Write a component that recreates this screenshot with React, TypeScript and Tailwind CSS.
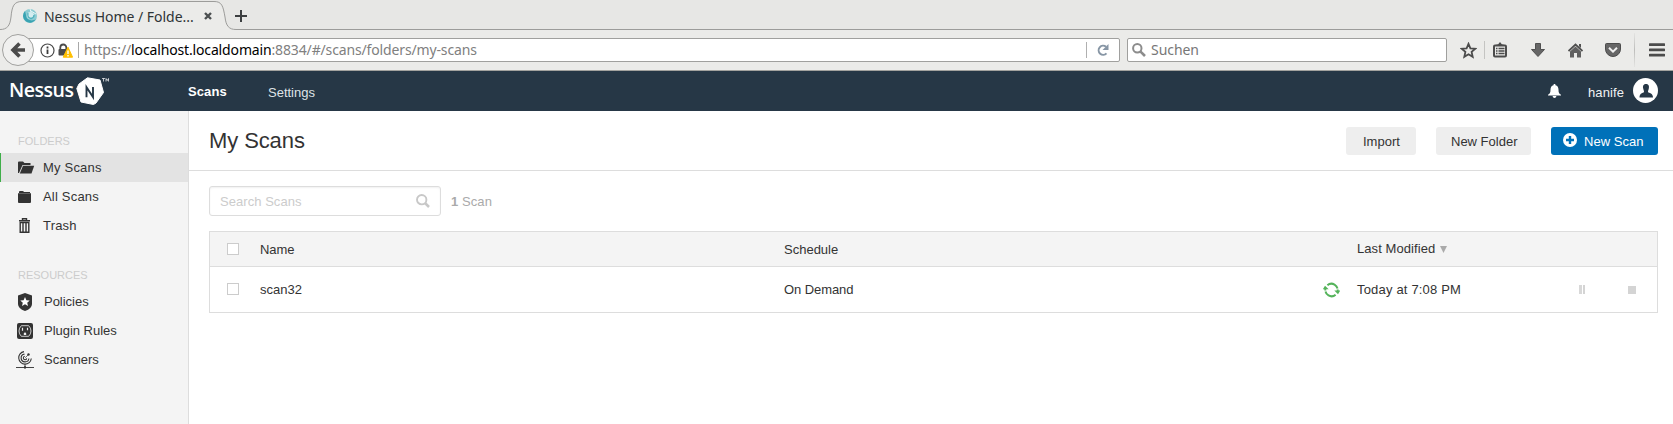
import React from "react";

function TabStrip() {
  return (
    <div className="relative flex h-[30px] bg-[#e7e7e5] font-['Noto_Sans',sans-serif]">
      <svg className="absolute inset-0" width="1673" height="30" viewBox="0 0 1673 30">
        <path d="M0 29.5C7 29.5 10 26 11 17C12 6 14 1.5 22 1.5H214C222 1.5 223 6 225 17C226 26 229 29.5 236 29.5V30H0Z" fill="#ebebe9" />
        <path d="M0 29.5C7 29.5 10 26 11 17C12 6 14 1.5 22 1.5H214C222 1.5 223 6 225 17C226 26 229 29.5 236 29.5H1673" fill="none" stroke="#9c9c9a" />
      </svg>
      <div className="relative flex h-8 items-center">
        <svg className="ml-[23px]" width="14" height="14" viewBox="0 0 14 14">
          <circle cx="7" cy="7" r="7" fill="#8ccbd2" />
          <path d="M2 2A7 7 0 0 0 3 12.600A7 7 0 0 0 13 10C9 13 3 11 3 6Z" fill="#39a3b2" />
          <circle cx="7.500" cy="6.500" r="3.500" fill="#d5edf0" />
          <path d="M5 4Q4 9 8 9.500Q11 9 11 6" fill="none" stroke="#52b2be" strokeWidth="1.300" />
          <path d="M8 2L13 5M7 0L8 3" stroke="#e8f6f7" strokeWidth="1" />
        </svg>
        <span className="ml-[7px] w-[151px] whitespace-nowrap text-[14px] tracking-[-0.030px] text-[#2e3436]">Nessus Home / Folde...</span>
        <svg className="ml-[9px]" width="8" height="8" viewBox="0 0 8 8">
          <path d="M1 1L7 7M7 1L1 7" stroke="#4b4f50" strokeWidth="2.400" />
        </svg>
        <svg className="ml-[23px]" width="12" height="12" viewBox="0 0 12 12">
          <path d="M6 0V12M0 6H12" stroke="#3c3f40" strokeWidth="2" />
        </svg>
      </div>
    </div>
  );
}

function Toolbar() {
  return (
    <div className="flex h-[41px] items-center border-b border-[#a3a39f] bg-[#ebebe9] font-['Noto_Sans',sans-serif]">
      <svg className="relative z-10 ml-[2px] shrink-0" width="32" height="32" viewBox="0 0 32 32">
        <circle cx="16" cy="16" r="15.500" fill="#f0f0ef" stroke="#a0a09e" />
        <path d="M17.500 9.500L11 16L17.500 22.500M11 16H23" fill="none" stroke="#4b4b4b" strokeWidth="3.600" />
      </svg>
      <div className="-ml-[8px] flex h-[24px] w-[1094px] items-center rounded-r-[2px] border border-[#a0a09e] bg-white">
        <svg className="ml-[13px]" width="15" height="15" viewBox="0 0 15 15">
          <circle cx="7.500" cy="7.500" r="6.500" fill="none" stroke="#4a4a4a" strokeWidth="1.200" />
          <path d="M7.500 6.500V11M7.500 3.500V5.500" stroke="#3c3c3c" strokeWidth="1.800" />
        </svg>
        <svg className="ml-[3px]" width="15" height="15" viewBox="0 0 15 15">
          <path d="M2.300 7V4.500A3 3 0 0 1 8.300 4.500V7" fill="none" stroke="#4a4a4a" strokeWidth="1.800" />
          <rect x="0.500" y="6" width="9" height="6.500" rx="1" fill="#4a4a4a" />
          <path d="M10 4.200L14.600 14.200H5.200Z" fill="#ffbf00" stroke="#ffbf00" strokeLinejoin="round" />
          <path d="M10 7.500V11M10 12V13.400" stroke="#fff" strokeWidth="1.400" />
        </svg>
        <span className="ml-[5px] h-4 w-px bg-[#a8a8a8]" />
        <span className="ml-[5px] whitespace-nowrap text-[14px] leading-[22px] tracking-[-0.145px] text-[#808080]">
          https://<span className="text-black">localhost.localdomain</span>:8834/#/scans/folders/my-scans
        </span>
        <span className="ml-auto h-4 w-px bg-[#b0b0b0]" />
        <svg className="mx-[10px]" width="12" height="12" viewBox="0 0 12 12">
          <path d="M9.500 9.300A4.500 4.500 0 1 1 9 2.800" fill="none" stroke="#8796a5" strokeWidth="2" />
          <path d="M11.500 0V6H5.500Z" fill="#8796a5" />
        </svg>
      </div>
      <div className="ml-[7px] flex h-[24px] w-[320px] items-center rounded-[2px] border border-[#a0a09e] bg-white">
        <svg className="ml-1" width="14" height="14" viewBox="0 0 14 14">
          <circle cx="5.300" cy="5.300" r="4.200" fill="none" stroke="#8c8c8c" strokeWidth="2" />
          <path d="M8.300 8.300L13 13" stroke="#8c8c8c" strokeWidth="2.600" />
        </svg>
        <span className="ml-[5px] text-[14px] leading-[22px] tracking-[-0.050px] text-[#777]">Suchen</span>
      </div>
      <svg className="ml-[13px]" width="17" height="17" viewBox="0 0 17 17">
        <path d="M8.500 1.800L10.400 6.300L15.300 6.700L11.600 9.900L12.700 14.800L8.500 12.200L4.300 14.800L5.400 9.900L1.700 6.700L6.600 6.300Z" fill="none" stroke="#4c4c4c" strokeWidth="1.800" />
      </svg>
      <span className="ml-[7px] h-[18px] w-px bg-[#c4c4c2]" />
      <svg className="ml-2" width="14" height="16" viewBox="0 0 14 16">
        <rect x="1" y="3.500" width="12" height="11" rx="1" fill="#ebebe9" stroke="#4c4c4c" strokeWidth="2" />
        <path d="M3.500 4V2.500H5L7 0L9 2.500H10.500V4Z" fill="#4c4c4c" />
        <path d="M3 6.500H4.500M5.500 6.500H11.500M3 9H4.500M5.500 9H11.500M3 11.500H4.500M5.500 11.500H11.500" stroke="#4c4c4c" strokeWidth="1.300" />
      </svg>
      <svg className="ml-6" width="14" height="14" viewBox="0 0 14 14">
        <path d="M4.500 0.500H9.500V6.500H13.500L7 13.500L0.500 6.500H4.500Z" fill="#666" stroke="#505050" />
      </svg>
      <svg className="ml-[23px]" width="15" height="15" viewBox="0 0 15 15">
        <path d="M0.500 8L7.500 1.500L14.500 8" fill="none" stroke="#505050" strokeWidth="1.800" />
        <path d="M7.500 3.500L13 8.500V14.500H9V10H6V14.500H2V8.500Z" fill="#606060" />
        <path d="M11 1H13V5L11 3.200Z" fill="#505050" />
      </svg>
      <svg className="ml-[22px]" width="16" height="14" viewBox="0 0 16 14">
        <path d="M1.500 0.500H14.500Q15.500 0.500 15.500 1.500V6A7.500 7.500 0 0 1 0.500 6V1.500Q0.500 0.500 1.500 0.500Z" fill="#666" stroke="#4c4c4c" />
        <path d="M4 4.800L8 8.600L12 4.800" fill="none" stroke="#f0f0f0" strokeWidth="2" />
      </svg>
      <span className="ml-[13px] h-[34px] w-px bg-gradient-to-b from-[#e4e4e2] via-[#bdbdbb] to-[#e4e4e2]" />
      <svg className="ml-[14px]" width="16" height="14" viewBox="0 0 16 14">
        <path d="M1 1.700H15M1 6.900H15M1 12.100H15" stroke="#4c4c4c" strokeWidth="2.800" strokeLinecap="round" />
      </svg>
    </div>
  );
}

function Header() {
  return (
    <header className="flex h-10 bg-[#263746] text-[13px] leading-10">
      <div className="flex w-[179px] shrink-0 pl-[9px]">
        <span className="w-[65px] font-['Open_Sans',sans-serif] text-[19.500px] font-semibold leading-[38px] tracking-[-0.500px] text-white">Nessus</span>
        <svg className="ml-[2px] mt-[6px]" width="33" height="29" viewBox="0 0 33 29">
          <path d="M11.500 0.800L24 3L27.500 15.500L20 26L17.500 27.500L5 25L0.800 11.500L3 7Z" fill="#fff" stroke="#fff" strokeLinejoin="round" />
          <path d="M10.500 20.200V10.200L17 20V10" fill="none" stroke="#263746" strokeWidth="1.900" />
          <path d="M26 1.500H29M27.500 1.500V4.500M30 4.500V1.500L31.300 3.500L32.500 1.500V4.500" fill="none" stroke="#fff" strokeWidth="0.700" />
        </svg>
      </div>
      <span className="ml-[9px] mt-px w-[80px] font-bold tracking-[0.100px] text-white">Scans</span>
      <span className="mt-[2px] text-[#dfe3e6]">Settings</span>
      <div className="ml-auto flex pr-[15px]">
        <svg className="mt-[13px]" width="13" height="14" viewBox="0 0 13 14">
          <path d="M6.500 0C7.300 0 7.500 .6 7.500 1.200C9.600 1.700 10.500 3.400 10.500 5.800C10.500 8.700 11.200 10 13 10.800V11.500H0V10.800C1.800 10 2.500 8.700 2.500 5.800C2.500 3.400 3.400 1.700 5.500 1.200C5.500 .6 5.700 0 6.500 0ZM4.500 12H8.500Q8 14 6.500 14Q5 14 4.500 12Z" fill="#fff" />
        </svg>
        <span className="ml-[27px] mt-[2px] w-[45px] tracking-[0.100px] text-[#f0f2f4]">hanife</span>
        <svg className="mt-[7px]" width="25" height="25" viewBox="0 0 25 25">
          <circle cx="12.500" cy="12.500" r="12.500" fill="#fff" />
          <path d="M13 6C16 6 16.300 8.500 15.800 10.500C15.500 12 15 12.500 15 14C16 15.300 20 15 20 19.500H6.500C6.500 15 10 15.300 11 14C11 12.500 10.500 12 10.200 10.500C9.700 8.500 10 6 13 6Z" fill="#263746" />
        </svg>
      </div>
    </header>
  );
}

function NavItem({ icon, label, active, shifted }: { icon: React.ReactNode; label: string; active?: boolean; shifted?: boolean }) {
  return (
    <div className={`flex h-[29px] items-center border-l ${active ? "border-[#3fae49] bg-[#e3e3e3]" : "border-transparent"}`}>
      <span className={`flex justify-start ${shifted ? "w-[43px] pl-[15px]" : "w-[42px] pl-[17px]"}`}>{icon}</span>
      <span className={`mt-px text-[13px] leading-[20px] text-[#333] ${shifted ? "tracking-[-0.020px]" : "tracking-[0.200px]"}`}>{label}</span>
    </div>
  );
}

function Sidebar() {
  return (
    <aside className="w-[189px] shrink-0 border-r border-[#ddd] bg-[#f4f4f4]">
      <div className="h-[42px] pl-[18px] pt-[20px] text-[11px] leading-[20px] text-[#ccc]">FOLDERS</div>
      <NavItem active label="My Scans" icon={
        <svg width="17" height="13" viewBox="0 0 17 13" className="shrink-0">
          <path d="M0 12V1.500Q0 .5 1 .5H5L6.500 2H12.500V4H4.500L1 12Z" fill="#333" />
          <path d="M5 4.800H16.200L13.500 12.500H1.800Z" fill="#333" />
        </svg>} />
      <NavItem label="All Scans" icon={
        <svg width="13" height="12" viewBox="0 0 13 12" className="shrink-0">
          <path d="M1 1.500V.8Q1 0 2 0H4.500Q5.500 0 6 1H12V2H1ZM0 2.300H13V11Q13 12 12 12H1Q0 12 0 11Z" fill="#333" />
        </svg>} />
      <NavItem label="Trash" icon={
        <svg width="13" height="15" viewBox="0 0 13 15" className="shrink-0">
          <path d="M4.500 2V.7H8.500V2M1 2.700H12" fill="none" stroke="#333" strokeWidth="1.400" />
          <path d="M2.200 4.500H10.800V14.300H2.200Z" fill="none" stroke="#333" strokeWidth="1.400" />
          <path d="M5 4V14M8 4V14" stroke="#333" strokeWidth="1.400" />
        </svg>} />
      <div className="h-[47px] pl-[18px] pt-[25px] text-[11px] leading-[20px] text-[#ccc]">RESOURCES</div>
      <NavItem shifted label="Policies" icon={
        <svg width="18" height="18" viewBox="0 0 18 18" className="shrink-0">
          <path d="M9 0L16 2.500V11Q16 15.500 9 18Q2 15.500 2 11V2.500Z" fill="#333" />
          <path d="M9 4L10.400 7.200L13.700 7.500L11.200 9.700L12 13L9 11.300L6 13L6.800 9.700L4.300 7.500L7.600 7.200Z" fill="#fff" />
        </svg>} />
      <NavItem shifted label="Plugin Rules" icon={
        <svg width="17" height="16" viewBox="0 0 17 16" className="shrink-0">
          <rect x="1" width="16" height="16" rx="2" fill="#333" />
          <path d="M5.300 2.700H12.700Q15 5 15 8T12.700 13.300H5.300Q3 11 3 8T5.300 2.700Z" fill="none" stroke="#ddd" strokeWidth="0.900" />
          <path d="M6.500 4.700V7.800M11.500 4.700V7.300" stroke="#eee" strokeWidth="1.200" />
          <path d="M7.800 12V10.700Q7.800 9.500 9 9.500T10.200 10.700V12Z" fill="#eee" />
        </svg>} />
      <NavItem shifted label="Scanners" icon={
        <svg width="18" height="18" viewBox="0 0 18 18" className="shrink-0">
          <path d="M8 .6A6.300 6.300 0 1 0 15.300 7.500M8.500 3.100A3.900 3.900 0 1 0 12.900 7.500M8.800 5.300A1.700 1.700 0 1 0 10.700 7.300" fill="none" stroke="#333" strokeWidth="1.100" />
          <path d="M9 13V16M0 16.500H18" stroke="#444" />
          <path d="M9.200 6.800L12 4" stroke="#333" strokeWidth="0.700" />
          <circle cx="12.500" cy="3.500" r="1.200" fill="#333" />
          <rect x="8" y="15.300" width="2" height="2.200" fill="#333" />
        </svg>} />
    </aside>
  );
}

function Checkbox() {
  return <span className="h-3 w-3 border border-[#ccc] bg-white" />;
}

function Content() {
  return (
    <main className="flex-1 bg-white text-[13px] text-[#333]">
      <div className="flex h-[60px] items-start border-b border-[#ddd] pl-5 pr-[15px]">
        <h1 className="mt-[13px] flex-1 text-[22px] leading-[34px] tracking-[-0.100px]">My Scans</h1>
        <div className="mt-4 flex h-7 leading-[29px]">
          <span className="w-[70px] rounded-[3px] bg-[#eee] pl-[17px]">Import</span>
          <span className="ml-5 w-[95px] rounded-[3px] bg-[#eee] pl-[15px]">New Folder</span>
          <span className="ml-5 flex w-[107px] rounded-[3px] bg-[#0071b9] tracking-[0.040px] text-white">
            <svg className="ml-3 mr-[7px] mt-[6px]" width="14" height="14" viewBox="0 0 14 14">
              <circle cx="7" cy="7" r="7" fill="#fff" />
              <path d="M7 3V11M3 7H11" stroke="#0071b9" strokeWidth="2.400" />
            </svg>
            New Scan
          </span>
        </div>
      </div>
      <div className="flex pl-5 pt-[15px]">
        <div className="flex h-[30px] w-[232px] items-center justify-between rounded-[3px] border border-[#ddd] px-[10px] text-[#ccc] shadow-[inset_0_1px_2px_#f1f1f1]">
          <span className="mt-px tracking-[0.050px]">Search Scans</span>
          <svg width="14" height="14" viewBox="0 0 14 14">
            <circle cx="5.700" cy="5.700" r="4.700" fill="none" stroke="#c8c8c8" strokeWidth="1.900" />
            <path d="M9 9L13 13" stroke="#c8c8c8" strokeWidth="2.500" />
          </svg>
        </div>
        <span className="ml-[10px] mt-px leading-[30px] tracking-[0.080px] text-[#aaa]"><b>1</b> Scan</span>
      </div>
      <div className="ml-5 mr-[15px] mt-[14px] border border-[#ddd]">
        <div className="flex h-[35px] items-center border-b border-[#ddd] bg-[#f4f4f4] pl-[17px]">
          <Checkbox />
          <span className="ml-[21px] mt-[2px] w-[524px] tracking-[-0.100px]">Name</span>
          <span className="mt-[2px] w-[573px]">Schedule</span>
          <span className="flex items-center gap-[5px] tracking-[0.080px]">Last Modified
            <svg width="7" height="7" viewBox="0 0 7 7"><path d="M0 0H7L3.500 7Z" fill="#aaa" /></svg>
          </span>
        </div>
        <div className="flex h-[45px] items-center pl-[17px]">
          <span className="-mt-px flex"><Checkbox /></span>
          <span className="ml-[21px] mt-px w-[524px]">scan32</span>
          <span className="mt-px w-[539px] tracking-[-0.080px]">On Demand</span>
          <svg className="mr-[17px] mt-px" width="17" height="16" viewBox="0 0 17 16">
            <path d="M4.400 3.300A6.200 6.200 0 0 1 14.600 9M12.600 12.700A6.200 6.200 0 0 1 2.400 7" fill="none" stroke="#54b35a" strokeWidth="2" strokeDasharray="12.500 1" />
            <path d="M11.300 8.600H17.200L15 12.200ZM-0.200 7.300L2 3.800L5.700 7.300Z" fill="#54b35a" />
          </svg>
          <span className="mt-px w-[222px] tracking-[0.180px]">Today at 7:08 PM</span>
          <span className="flex h-[9px] w-[49px] gap-px">
            <i className="h-[9px] w-[3px] bg-[#d8d8d8]" />
            <i className="h-[9px] w-[2px] bg-[#d4d4d4]" />
          </span>
          <span className="h-2 w-2 bg-[#d4d4d4]" />
        </div>
      </div>
    </main>
  );
}

export default function App() {
  return (
    <div className="flex h-[424px] w-[1673px] flex-col overflow-hidden font-['Liberation_Sans',Arial,sans-serif]">
      <TabStrip />
      <Toolbar />
      <Header />
      <div className="flex flex-1">
        <Sidebar />
        <Content />
      </div>
    </div>
  );
}
